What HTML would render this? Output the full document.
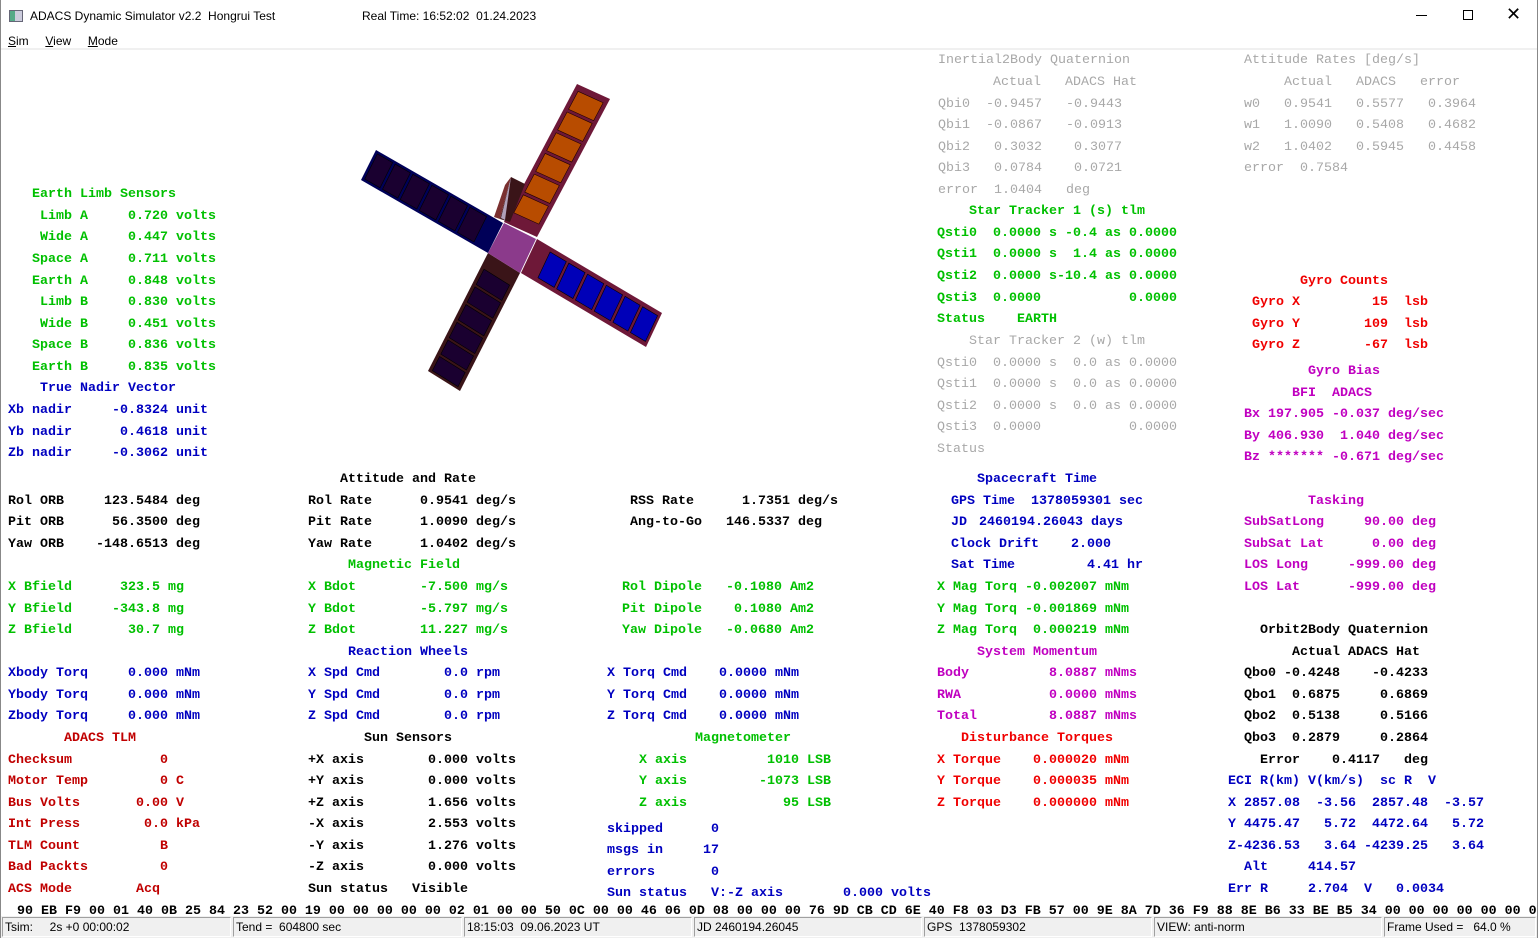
<!DOCTYPE html>
<html><head><meta charset="utf-8"><style>
*{margin:0;padding:0;box-sizing:border-box}
body{width:1538px;height:938px;background:#fff;position:relative;overflow:hidden;font-family:"Liberation Sans",sans-serif}
.t{position:absolute;white-space:pre;font:bold 13.33px/16px "Liberation Mono",monospace;color:#000;margin-top:3px}
.g{color:#00c000}.b{color:#0000c0}.r{color:#c00000}.R{color:#f00000}.m{color:#c000c0}.y{color:#a8a8a8;font-weight:normal}
.sb{position:absolute;top:917px;height:20px;background:#f0f0f0;border-top:1px solid #a0a0a0;border-left:1px solid #a0a0a0;border-right:1px solid #fff;border-bottom:1px solid #fff;font-size:12px;line-height:18px;padding-left:2px;white-space:pre;color:#000;transform-origin:left;}
</style></head><body>
<div style="position:absolute;left:0;top:0;width:1538px;height:938px;border:1px solid #888;border-top:none"></div>
<div style="position:absolute;left:9px;top:10px;width:14px;height:12px;border:1px solid #667;background:linear-gradient(90deg,#5a8 0 40%,#ccd 40%)"></div>
<div style="position:absolute;left:30px;top:9px;font-size:12px;white-space:pre">ADACS Dynamic Simulator v2.2  Hongrui Test</div>
<div style="position:absolute;left:362px;top:9px;font-size:12px;white-space:pre">Real Time: 16:52:02  01.24.2023</div>
<div style="position:absolute;left:1416px;top:15px;width:11px;height:1px;background:#000"></div>
<div style="position:absolute;left:1463px;top:10px;width:10px;height:10px;border:1px solid #000"></div>
<div style="position:absolute;left:1506px;top:4px;font-size:18px;font-weight:normal">✕</div>
<div style="position:absolute;left:8px;top:34px;font-size:12px;white-space:pre"><u>S</u>im     <u>V</u>iew     <u>M</u>ode</div>
<div style="position:absolute;left:1px;top:48px;width:1536px;height:2px;background:#f0f0f0"></div>

<svg style="position:absolute;left:0;top:0" width="700" height="400">
<g transform="matrix(33,15,73,-138,504,222)">
<rect x="0" y="0" width="1" height="1" fill="#6e1838"/>
<g fill="#b84c00" stroke="#200" stroke-width="0.6">
<rect x=".12" y=".08" width=".76" height=".13" vector-effect="non-scaling-stroke"/>
<rect x=".12" y=".23" width=".76" height=".13" vector-effect="non-scaling-stroke"/>
<rect x=".12" y=".38" width=".76" height=".13" vector-effect="non-scaling-stroke"/>
<rect x=".12" y=".53" width=".76" height=".13" vector-effect="non-scaling-stroke"/>
<rect x=".12" y=".68" width=".76" height=".13" vector-effect="non-scaling-stroke"/>
<rect x=".12" y=".83" width=".76" height=".13" vector-effect="non-scaling-stroke"/>
</g></g>
<g transform="matrix(-15,30,-127,-73,503,223)">
<rect x="0" y="0" width="1" height="1" fill="#000058"/>
<g fill="#1a0030" stroke="#000" stroke-width="0.6">
<rect x=".08" y=".12" width=".84" height=".13" vector-effect="non-scaling-stroke"/>
<rect x=".08" y=".27" width=".84" height=".13" vector-effect="non-scaling-stroke"/>
<rect x=".08" y=".42" width=".84" height=".13" vector-effect="non-scaling-stroke"/>
<rect x=".08" y=".57" width=".84" height=".13" vector-effect="non-scaling-stroke"/>
<rect x=".08" y=".72" width=".84" height=".12" vector-effect="non-scaling-stroke"/>
<rect x=".08" y=".86" width=".84" height=".12" vector-effect="non-scaling-stroke"/>
</g></g>
<g transform="matrix(-16,34,125,74,537,239)">
<rect x="0" y="0" width="1" height="1" fill="#6e1838"/>
<g fill="#0000b8" stroke="#000" stroke-width="0.6">
<rect x=".12" y=".12" width=".76" height=".13" vector-effect="non-scaling-stroke"/>
<rect x=".12" y=".27" width=".76" height=".13" vector-effect="non-scaling-stroke"/>
<rect x=".12" y=".42" width=".76" height=".13" vector-effect="non-scaling-stroke"/>
<rect x=".12" y=".57" width=".76" height=".13" vector-effect="non-scaling-stroke"/>
<rect x=".12" y=".72" width=".76" height=".12" vector-effect="non-scaling-stroke"/>
<rect x=".12" y=".86" width=".76" height=".12" vector-effect="non-scaling-stroke"/>
</g></g>
<g transform="matrix(32,20,-60,118,488,253)">
<rect x="0" y="0" width="1" height="1" fill="#3a1418"/>
<g fill="#1a0030" stroke="#000" stroke-width="0.6">
<rect x=".1" y=".12" width=".8" height=".13" vector-effect="non-scaling-stroke"/>
<rect x=".1" y=".27" width=".8" height=".13" vector-effect="non-scaling-stroke"/>
<rect x=".1" y=".42" width=".8" height=".13" vector-effect="non-scaling-stroke"/>
<rect x=".1" y=".57" width=".8" height=".13" vector-effect="non-scaling-stroke"/>
<rect x=".1" y=".72" width=".8" height=".12" vector-effect="non-scaling-stroke"/>
<rect x=".1" y=".86" width=".8" height=".12" vector-effect="non-scaling-stroke"/>
</g></g>
<polygon points="511,177 525,184 510,222 500,219" fill="#3a1418"/>
<polygon points="511,177 500,219 494,217 505,185" fill="#7a3030"/>
<polygon points="511,177 505,220 501,218" fill="#b0a0b8"/>
<polygon points="504,223 536,239 520,273 488,253" fill="#8b3a8b"/>
</svg>

<div class="t y" style="left:938px;top:50px">Inertial2Body Quaternion</div>
<div class="t y" style="left:993px;top:72px">Actual   ADACS Hat</div>
<div class="t y" style="left:938px;top:94px">Qbi0  -0.9457   -0.9443</div>
<div class="t y" style="left:938px;top:115px">Qbi1  -0.0867   -0.0913</div>
<div class="t y" style="left:938px;top:137px">Qbi2   0.3032    0.3077</div>
<div class="t y" style="left:938px;top:158px">Qbi3   0.0784    0.0721</div>
<div class="t y" style="left:938px;top:180px">error  1.0404   deg</div>
<div class="t y" style="left:1244px;top:50px">Attitude Rates [deg/s]</div>
<div class="t y" style="left:1284px;top:72px">Actual   ADACS   error</div>
<div class="t y" style="left:1244px;top:94px">w0   0.9541   0.5577   0.3964</div>
<div class="t y" style="left:1244px;top:115px">w1   1.0090   0.5408   0.4682</div>
<div class="t y" style="left:1244px;top:137px">w2   1.0402   0.5945   0.4458</div>
<div class="t y" style="left:1244px;top:158px">error  0.7584</div>

<div class="t g" style="left:969px;top:201px">Star Tracker 1 (s) tlm</div>
<div class="t g" style="left:937px;top:223px">Qsti0  0.0000 s -0.4 as 0.0000</div>
<div class="t g" style="left:937px;top:244px">Qsti1  0.0000 s  1.4 as 0.0000</div>
<div class="t g" style="left:937px;top:266px">Qsti2  0.0000 s-10.4 as 0.0000</div>
<div class="t g" style="left:937px;top:288px">Qsti3  0.0000           0.0000</div>
<div class="t g" style="left:937px;top:309px">Status    EARTH</div>
<div class="t y" style="left:969px;top:331px">Star Tracker 2 (w) tlm</div>
<div class="t y" style="left:937px;top:353px">Qsti0  0.0000 s  0.0 as 0.0000</div>
<div class="t y" style="left:937px;top:374px">Qsti1  0.0000 s  0.0 as 0.0000</div>
<div class="t y" style="left:937px;top:396px">Qsti2  0.0000 s  0.0 as 0.0000</div>
<div class="t y" style="left:937px;top:417px">Qsti3  0.0000           0.0000</div>
<div class="t y" style="left:937px;top:439px">Status</div>

<div class="t R" style="left:1300px;top:271px">Gyro Counts</div>
<div class="t R" style="left:1252px;top:292px">Gyro X         15  lsb</div>
<div class="t R" style="left:1252px;top:314px">Gyro Y        109  lsb</div>
<div class="t R" style="left:1252px;top:335px">Gyro Z        -67  lsb</div>
<div class="t m" style="left:1308px;top:361px">Gyro Bias</div>
<div class="t m" style="left:1292px;top:383px">BFI  ADACS</div>
<div class="t m" style="left:1244px;top:404px">Bx 197.905 -0.037 deg/sec</div>
<div class="t m" style="left:1244px;top:426px">By 406.930  1.040 deg/sec</div>
<div class="t m" style="left:1244px;top:447px">Bz ******* -0.671 deg/sec</div>

<div class="t g" style="left:32px;top:184px">Earth Limb Sensors</div>
<div class="t g" style="left:32px;top:206px"> Limb A     0.720 volts</div>
<div class="t g" style="left:32px;top:227px"> Wide A     0.447 volts</div>
<div class="t g" style="left:32px;top:249px">Space A     0.711 volts</div>
<div class="t g" style="left:32px;top:271px">Earth A     0.848 volts</div>
<div class="t g" style="left:32px;top:292px"> Limb B     0.830 volts</div>
<div class="t g" style="left:32px;top:314px"> Wide B     0.451 volts</div>
<div class="t g" style="left:32px;top:335px">Space B     0.836 volts</div>
<div class="t g" style="left:32px;top:357px">Earth B     0.835 volts</div>
<div class="t b" style="left:40px;top:378px">True Nadir Vector</div>
<div class="t b" style="left:8px;top:400px">Xb nadir     -0.8324 unit</div>
<div class="t b" style="left:8px;top:422px">Yb nadir      0.4618 unit</div>
<div class="t b" style="left:8px;top:443px">Zb nadir     -0.3062 unit</div>

<div class="t" style="left:340px;top:469px">Attitude and Rate</div>
<div class="t" style="left:8px;top:491px">Rol ORB     123.5484 deg</div>
<div class="t" style="left:8px;top:512px">Pit ORB      56.3500 deg</div>
<div class="t" style="left:8px;top:534px">Yaw ORB    -148.6513 deg</div>
<div class="t" style="left:308px;top:491px">Rol Rate      0.9541 deg/s</div>
<div class="t" style="left:308px;top:512px">Pit Rate      1.0090 deg/s</div>
<div class="t" style="left:308px;top:534px">Yaw Rate      1.0402 deg/s</div>
<div class="t" style="left:630px;top:491px">RSS Rate      1.7351 deg/s</div>
<div class="t" style="left:630px;top:512px">Ang-to-Go   146.5337 deg</div>

<div class="t b" style="left:977px;top:469px">Spacecraft Time</div>
<div class="t b" style="left:951px;top:491px">GPS Time  1378059301 sec</div>
<div class="t b" style="left:951px;top:512px">JD</div>
<div class="t b" style="left:979px;top:512px">2460194.26043 days</div>
<div class="t b" style="left:951px;top:534px">Clock Drift    2.000</div>
<div class="t b" style="left:951px;top:555px">Sat Time         4.41 hr</div>

<div class="t m" style="left:1308px;top:491px">Tasking</div>
<div class="t m" style="left:1244px;top:512px">SubSatLong     90.00 deg</div>
<div class="t m" style="left:1244px;top:534px">SubSat Lat      0.00 deg</div>
<div class="t m" style="left:1244px;top:555px">LOS Long     -999.00 deg</div>
<div class="t m" style="left:1244px;top:577px">LOS Lat      -999.00 deg</div>

<div class="t g" style="left:348px;top:555px">Magnetic Field</div>
<div class="t g" style="left:8px;top:577px">X Bfield      323.5 mg</div>
<div class="t g" style="left:8px;top:599px">Y Bfield     -343.8 mg</div>
<div class="t g" style="left:8px;top:620px">Z Bfield       30.7 mg</div>
<div class="t g" style="left:308px;top:577px">X Bdot        -7.500 mg/s</div>
<div class="t g" style="left:308px;top:599px">Y Bdot        -5.797 mg/s</div>
<div class="t g" style="left:308px;top:620px">Z Bdot        11.227 mg/s</div>
<div class="t g" style="left:622px;top:577px">Rol Dipole   -0.1080 Am2</div>
<div class="t g" style="left:622px;top:599px">Pit Dipole    0.1080 Am2</div>
<div class="t g" style="left:622px;top:620px">Yaw Dipole   -0.0680 Am2</div>
<div class="t g" style="left:937px;top:577px">X Mag Torq -0.002007 mNm</div>
<div class="t g" style="left:937px;top:599px">Y Mag Torq -0.001869 mNm</div>
<div class="t g" style="left:937px;top:620px">Z Mag Torq  0.000219 mNm</div>

<div class="t b" style="left:348px;top:642px">Reaction Wheels</div>
<div class="t b" style="left:8px;top:663px">Xbody Torq     0.000 mNm</div>
<div class="t b" style="left:8px;top:685px">Ybody Torq     0.000 mNm</div>
<div class="t b" style="left:8px;top:706px">Zbody Torq     0.000 mNm</div>
<div class="t b" style="left:308px;top:663px">X Spd Cmd        0.0 rpm</div>
<div class="t b" style="left:308px;top:685px">Y Spd Cmd        0.0 rpm</div>
<div class="t b" style="left:308px;top:706px">Z Spd Cmd        0.0 rpm</div>
<div class="t b" style="left:607px;top:663px">X Torq Cmd    0.0000 mNm</div>
<div class="t b" style="left:607px;top:685px">Y Torq Cmd    0.0000 mNm</div>
<div class="t b" style="left:607px;top:706px">Z Torq Cmd    0.0000 mNm</div>
<div class="t m" style="left:977px;top:642px">System Momentum</div>
<div class="t m" style="left:937px;top:663px">Body          8.0887 mNms</div>
<div class="t m" style="left:937px;top:685px">RWA           0.0000 mNms</div>
<div class="t m" style="left:937px;top:706px">Total         8.0887 mNms</div>

<div class="t" style="left:1260px;top:620px">Orbit2Body Quaternion</div>
<div class="t" style="left:1292px;top:642px">Actual ADACS Hat</div>
<div class="t" style="left:1244px;top:663px">Qbo0 -0.4248    -0.4233</div>
<div class="t" style="left:1244px;top:685px">Qbo1  0.6875     0.6869</div>
<div class="t" style="left:1244px;top:706px">Qbo2  0.5138     0.5166</div>
<div class="t" style="left:1244px;top:728px">Qbo3  0.2879     0.2864</div>
<div class="t" style="left:1260px;top:750px">Error    0.4117   deg</div>
<div class="t b" style="left:1228px;top:771px">ECI R(km) V(km/s)  sc R  V</div>
<div class="t b" style="left:1228px;top:793px">X 2857.08  -3.56  2857.48  -3.57</div>
<div class="t b" style="left:1228px;top:814px">Y 4475.47   5.72  4472.64   5.72</div>
<div class="t b" style="left:1228px;top:836px">Z-4236.53   3.64 -4239.25   3.64</div>
<div class="t b" style="left:1228px;top:857px">  Alt     414.57</div>
<div class="t b" style="left:1228px;top:879px">Err R     2.704  V   0.0034</div>

<div class="t r" style="left:64px;top:728px">ADACS TLM</div>
<div class="t r" style="left:8px;top:750px">Checksum           0</div>
<div class="t r" style="left:8px;top:771px">Motor Temp         0 C</div>
<div class="t r" style="left:8px;top:793px">Bus Volts       0.00 V</div>
<div class="t r" style="left:8px;top:814px">Int Press        0.0 kPa</div>
<div class="t r" style="left:8px;top:836px">TLM Count          B</div>
<div class="t r" style="left:8px;top:857px">Bad Packts         0</div>
<div class="t r" style="left:8px;top:879px">ACS Mode        Acq</div>

<div class="t" style="left:364px;top:728px">Sun Sensors</div>
<div class="t" style="left:308px;top:750px">+X axis        0.000 volts</div>
<div class="t" style="left:308px;top:771px">+Y axis        0.000 volts</div>
<div class="t" style="left:308px;top:793px">+Z axis        1.656 volts</div>
<div class="t" style="left:308px;top:814px">-X axis        2.553 volts</div>
<div class="t" style="left:308px;top:836px">-Y axis        1.276 volts</div>
<div class="t" style="left:308px;top:857px">-Z axis        0.000 volts</div>
<div class="t" style="left:308px;top:879px">Sun status   Visible</div>

<div class="t g" style="left:695px;top:728px">Magnetometer</div>
<div class="t g" style="left:639px;top:750px">X axis          1010 LSB</div>
<div class="t g" style="left:639px;top:771px">Y axis         -1073 LSB</div>
<div class="t g" style="left:639px;top:793px">Z axis            95 LSB</div>
<div class="t b" style="left:607px;top:819px">skipped      0</div>
<div class="t b" style="left:607px;top:840px">msgs in     17</div>
<div class="t b" style="left:607px;top:862px">errors       0</div>
<div class="t b" style="left:607px;top:883px">Sun status   V:-Z axis</div>
<div class="t b" style="left:843px;top:883px">0.000 volts</div>

<div class="t R" style="left:961px;top:728px">Disturbance Torques</div>
<div class="t R" style="left:937px;top:750px">X Torque    0.000020 mNm</div>
<div class="t R" style="left:937px;top:771px">Y Torque    0.000035 mNm</div>
<div class="t R" style="left:937px;top:793px">Z Torque    0.000000 mNm</div>

<div class="t" style="left:17px;top:901px">90 EB F9 00 01 40 0B 25 84 23 52 00 19 00 00 00 00 00 02 01 00 00 50 0C 00 00 46 06 0D 08 00 00 00 76 9D CB CD 6E 40 F8 03 D3 FB 57 00 9E 8A 7D 36 F9 88 8E B6 33 BE B5 34 00 00 00 00 00 00 0</div>

<div style="position:absolute;left:1px;top:916px;width:1536px;height:22px;background:#f0f0f0"></div>
<div class="sb" style="left:2px;width:229px">Tsim:     2s +0 00:00:02</div>
<div class="sb" style="left:233px;width:229px">Tend =  604800 sec</div>
<div class="sb" style="left:464px;width:228px">18:15:03  09.06.2023 UT</div>
<div class="sb" style="left:694px;width:228px">JD 2460194.26045</div>
<div class="sb" style="left:924px;width:228px">GPS  1378059302</div>
<div class="sb" style="left:1154px;width:228px">VIEW: anti-norm</div>
<div class="sb" style="left:1384px;width:152px">Frame Used =   64.0 %</div>
</body></html>
